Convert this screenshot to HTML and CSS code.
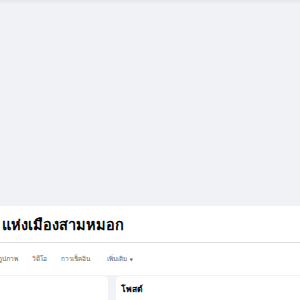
FILE: index.html
```html
<!DOCTYPE html>
<html lang="th">
<head>
  <meta charset="UTF-8">
  <meta name="viewport" content="width=device-width, initial-scale=1.0">
  <title>แห่งเมืองสามหมอก</title>
  <link rel="stylesheet" href="styles.css">
</head>
<body>

  <!-- top bar shadow -->
  <div class="top-shadow"></div>

  <!-- cover photo area -->
  <div class="cover"></div>

  <!-- page header -->
  <div class="page-header">
    <div class="page-title">แห่งเมืองสามหมอก</div>
    <div class="tabs">
      <span class="tab tab-cut">รูปภาพ</span>
      <span class="tab">วิดีโอ</span>
      <span class="tab">การเช็คอิน</span>
      <span class="tab tab-more">เพิ่มเติม <span class="caret">▼</span></span>
    </div>
  </div>

  <!-- content columns -->
  <div class="content">
    <div class="card card-left"></div>
    <div class="card card-right">
      <div class="card-title">โพสต์</div>
    </div>
  </div>

</body>
</html>
```

FILE: styles.css
```css
body {
  font-family: 'Noto Sans', 'DejaVu Sans', sans-serif;
  margin: 0;
  padding: 0;
  background: #f0f2f5;
  color: #050505;
  overflow: hidden;
}

.top-shadow {
  height: 3px;
  background: linear-gradient(#e4e6e9, #eceef1);
}

.cover {
  height: 203px;
}

.page-header {
  background: #fff;
}

.page-title {
  height: 37px;
  display: flex;
  align-items: center;
  padding-left: 2px;
  padding-top: 1px;
  box-sizing: border-box;
  font-size: 14.5px;
  font-weight: 700;
  border-bottom: 1px solid #dadde1;
  white-space: nowrap;
}

.tabs {
  height: 32px;
  display: flex;
  align-items: center;
  gap: 14px;
  font-size: 6.5px;
  color: #65676b;
  white-space: nowrap;
}

.tab-cut {
  margin-left: -1px;
}

.tab-more {
  margin-left: 3px;
}

.caret {
  font-size: 4px;
  margin-left: 1px;
  vertical-align: middle;
}

.content {
  display: flex;
  gap: 8px;
  padding-top: 1px;
}

.card {
  background: #fff;
  border-radius: 5px;
  height: 40px;
}

.card-left {
  width: 114px;
  margin-left: -6px;
}

.card-right {
  flex: 1;
  margin-right: -6px;
  padding: 6px 5px;
}

.card-title {
  font-size: 8.5px;
  font-weight: 700;
}
```
